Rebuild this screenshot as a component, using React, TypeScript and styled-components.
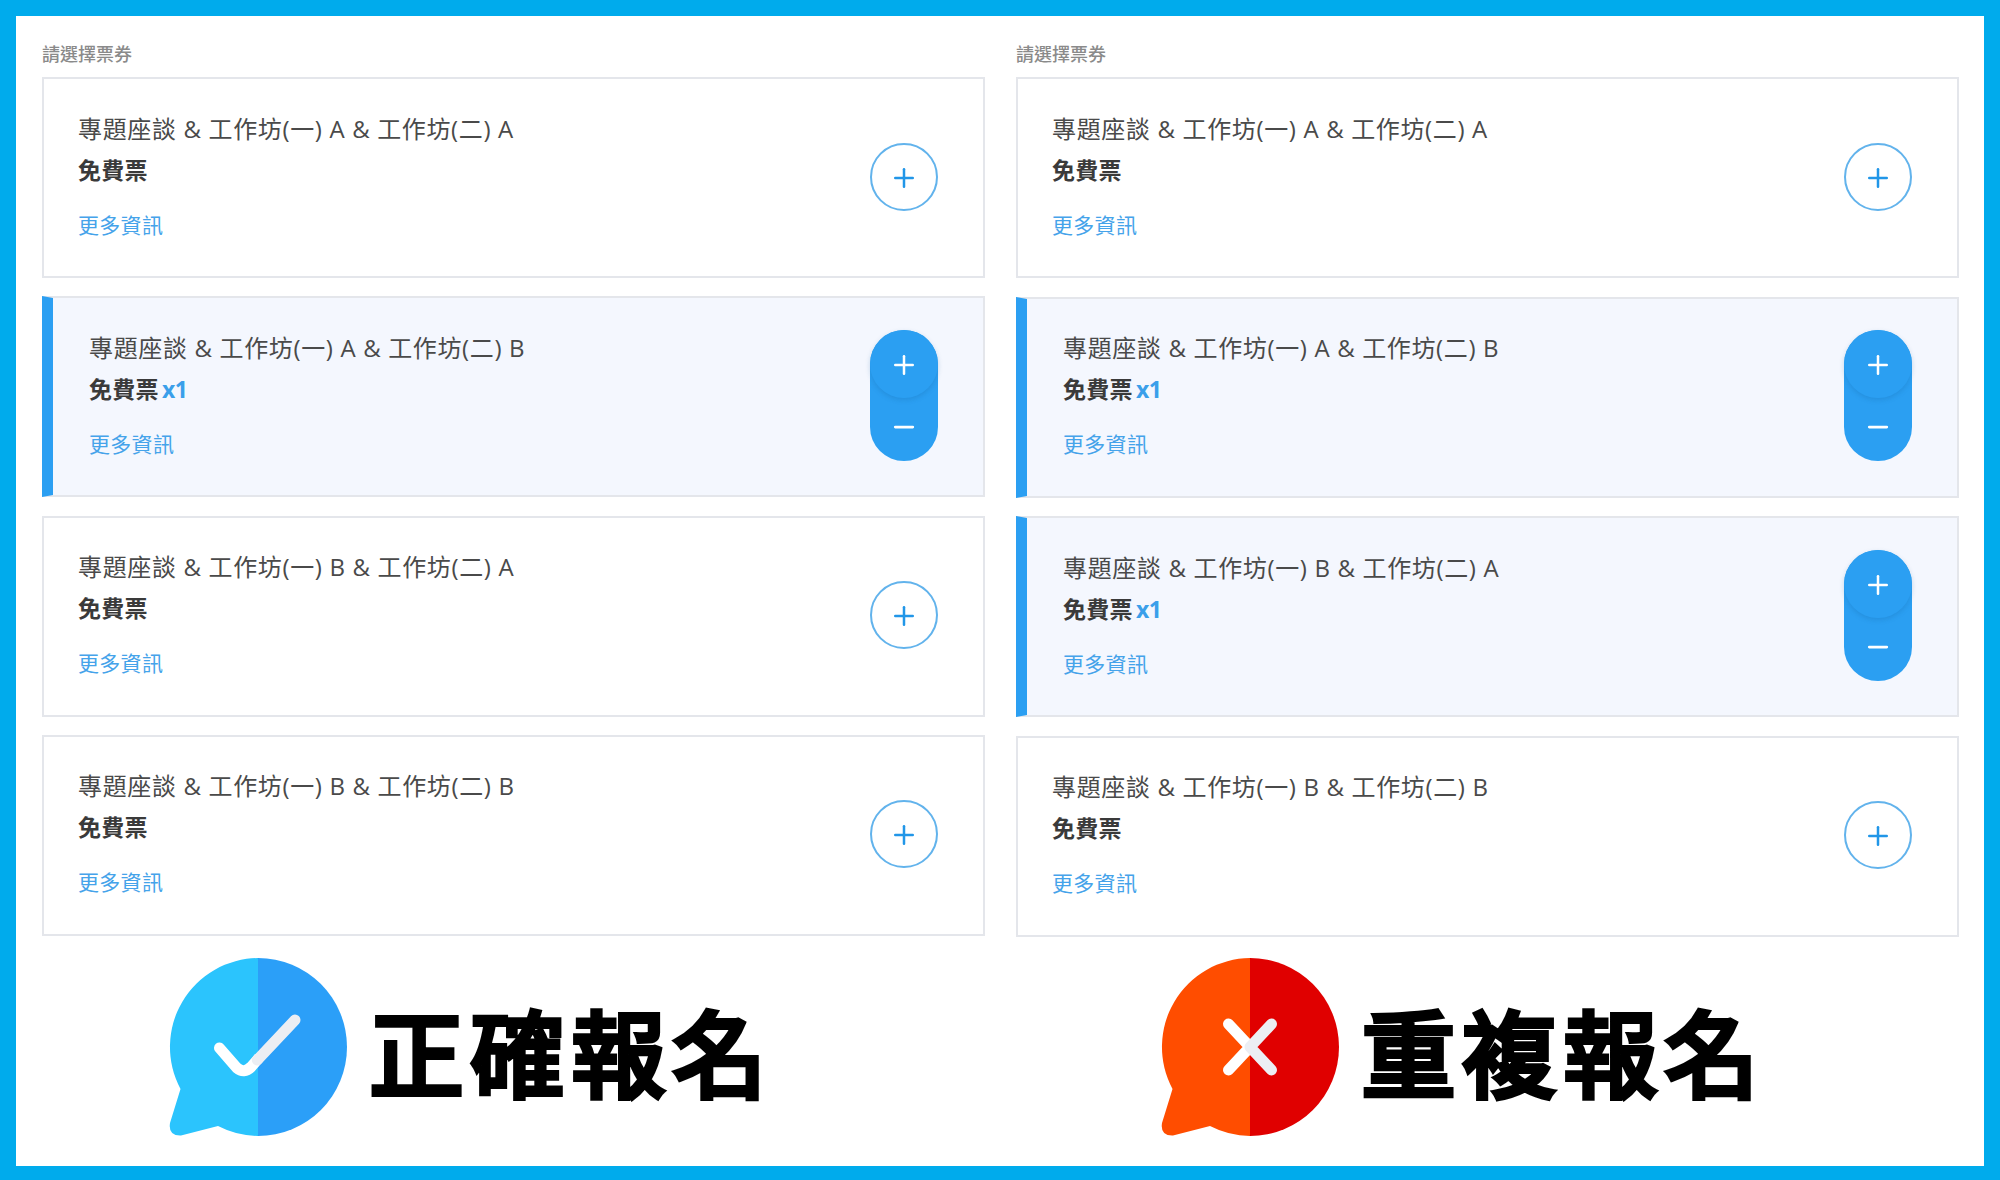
import { createGlobalStyle } from 'styled-components'
import styled from 'styled-components'
import { Minus, Plus } from 'lucide-react'

const GlobalStyle = createGlobalStyle`
  html, body {
    margin: 0;
    padding: 0;
    background: #fff;
  }
  * {
    box-sizing: border-box;
  }
`

const Frame = styled.div`
  width: 2000px;
  height: 1180px;
  border: 16px solid #00abec;
  border-bottom-width: 14px;
  background: #fff;
  padding: 25px 25px 0 26px;
  display: grid;
  grid-template-columns: 943px 943px;
  column-gap: 31px;
  font-family: 'Open Sans', 'Noto Sans CJK TC', sans-serif;
  overflow: hidden;
`

const Column = styled.section`
  display: flex;
  flex-direction: column;
`

const Label = styled.div`
  height: 24px;
  margin-bottom: 12px;
  font-size: 18px;
  line-height: 26px;
  font-weight: 500;
  color: #8a8a8a;
`

const TicketList = styled.div<{ $gap: number }>`
  display: flex;
  flex-direction: column;
  gap: ${({ $gap }) => $gap}px;
`

const Card = styled.div<{ $active?: boolean }>`
  height: 201px;
  display: flex;
  align-items: center;
  justify-content: space-between;
  padding: 0 45px 0 ${({ $active }) => ($active ? '36px' : '34px')};
  border: 2px solid #e4e6eb;
  border-left: ${({ $active }) => ($active ? '11px solid #2b9ff2' : '2px solid #e4e6eb')};
  background: ${({ $active }) => ($active ? '#f4f7fe' : '#fff')};
`

const Info = styled.div`
  display: flex;
  flex-direction: column;
  padding-bottom: 2px;
`

const Title = styled.div`
  font-size: 24px;
  line-height: 34px;
  letter-spacing: 0.65px;
  color: #4a4a4a;
`

const Ticket = styled.div`
  margin-top: 7px;
  font-size: 23px;
  line-height: 34px;
  letter-spacing: 0.3px;
  font-weight: 700;
  color: #3a3a3a;
`

const Count = styled.span`
  margin-left: 3px;
  font-size: 23px;
  letter-spacing: -0.5px;
  color: #3a9fea;
`

const MoreLink = styled.a`
  margin-top: 21px;
  font-size: 21px;
  line-height: 34px;
  letter-spacing: 0.3px;
  color: #45a3ea;
`

const AddButton = styled.button`
  width: 68px;
  height: 68px;
  margin-bottom: 2px;
  padding: 2px 0 0;
  display: flex;
  align-items: center;
  justify-content: center;
  border: 2px solid #62b3ec;
  border-radius: 50%;
  background: #fff;
  color: #2196e8;
`

const Stepper = styled.div`
  width: 68px;
  height: 131px;
  margin-bottom: 3px;
  display: flex;
  flex-direction: column;
  align-items: center;
  border-radius: 34px;
  background: #2b9ff2;
  color: #fff;
`

const StepPlus = styled.button`
  width: 68px;
  height: 68px;
  padding: 2px 0 0;
  display: flex;
  align-items: center;
  justify-content: center;
  border: 0;
  border-radius: 50%;
  background: #2b9ff2;
  color: inherit;
  box-shadow: 0 2px 5px rgba(20, 90, 150, 0.22);
`

const StepMinus = styled.button`
  width: 68px;
  height: 63px;
  padding: 0 0 5px;
  display: flex;
  align-items: center;
  justify-content: center;
  border: 0;
  background: none;
  color: inherit;
`

const Result = styled.div<{ $indent: number; $top: number }>`
  margin-top: ${({ $top }) => $top}px;
  padding-left: ${({ $indent }) => $indent}px;
  display: flex;
  align-items: flex-start;
  gap: 22px;
`

const ResultText = styled.div`
  padding-top: 33px;
  font-size: 95px;
  line-height: 118px;
  letter-spacing: 6px;
  font-weight: 500;
  color: #000;
  -webkit-text-stroke: 4px #000;
  paint-order: stroke fill;
  white-space: nowrap;
  font-family: 'Noto Sans CJK TC', sans-serif;
`

const tickets = [
  { id: 'AA', title: '專題座談 & 工作坊(一) A & 工作坊(二) A' },
  { id: 'AB', title: '專題座談 & 工作坊(一) A & 工作坊(二) B' },
  { id: 'BA', title: '專題座談 & 工作坊(一) B & 工作坊(二) A' },
  { id: 'BB', title: '專題座談 & 工作坊(一) B & 工作坊(二) B' },
]

function TicketCard({ title, active }: { title: string; active: boolean }) {
  return (
    <Card $active={active}>
      <Info>
        <Title>{title}</Title>
        <Ticket>
          免費票
          {active && <Count>x1</Count>}
        </Ticket>
        <MoreLink>更多資訊</MoreLink>
      </Info>
      {active ? (
        <Stepper>
          <StepPlus>
            <Plus size={30} strokeWidth={2} />
          </StepPlus>
          <StepMinus>
            <Minus size={30} strokeWidth={2.2} />
          </StepMinus>
        </Stepper>
      ) : (
        <AddButton>
          <Plus size={30} strokeWidth={2} />
        </AddButton>
      )}
    </Card>
  )
}

const bubbleLeft = 'M89 0A89 89 0 0 0 11.5 131L1 165Q-1 178 12 177.5L49 168A89 89 0 0 0 89 178Z'
const bubbleRight = 'M89 0A89 89 0 0 1 89 178Z'

function CheckBubble() {
  return (
    <svg width="178" height="178" viewBox="0 0 178 178">
      <path d={bubbleLeft} fill="#2bc4fd" />
      <path d={bubbleRight} fill="#2b9ff8" />
      <path d="M50.5 90L68 110Q75 116 82 109L89 101" fill="none" stroke="#fff" strokeWidth="11" strokeLinecap="round" />
      <path d="M88.3 102L126 62" fill="none" stroke="#eceef3" strokeWidth="11" strokeLinecap="round" />
    </svg>
  )
}

function CrossBubble() {
  return (
    <svg width="178" height="178" viewBox="0 0 178 178">
      <path d={bubbleLeft} fill="#ff4d00" />
      <path d={bubbleRight} fill="#e00000" />
      <path d="M67.5 66L89 89M67.5 112L89 89" fill="none" stroke="#fff" strokeWidth="11" strokeLinecap="round" />
      <path d="M110.5 66L89 89M110.5 112L89 89" fill="none" stroke="#eceef3" strokeWidth="11" strokeLinecap="round" />
    </svg>
  )
}

export default function App() {
  return (
    <>
      <GlobalStyle />
      <Frame>
        <Column>
          <Label>請選擇票券</Label>
          <TicketList $gap={18.33}>
            {tickets.map((t) => (
              <TicketCard key={t.id} title={t.title} active={t.id === 'AB'} />
            ))}
          </TicketList>
          <Result $indent={127} $top={22}>
            <CheckBubble />
            <ResultText>正確報名</ResultText>
          </Result>
        </Column>
        <Column>
          <Label>請選擇票券</Label>
          <TicketList $gap={18.67}>
            {tickets.map((t) => (
              <TicketCard key={t.id} title={t.title} active={t.id === 'AB' || t.id === 'BA'} />
            ))}
          </TicketList>
          <Result $indent={145} $top={21}>
            <CrossBubble />
            <ResultText>重複報名</ResultText>
          </Result>
        </Column>
      </Frame>
    </>
  )
}
